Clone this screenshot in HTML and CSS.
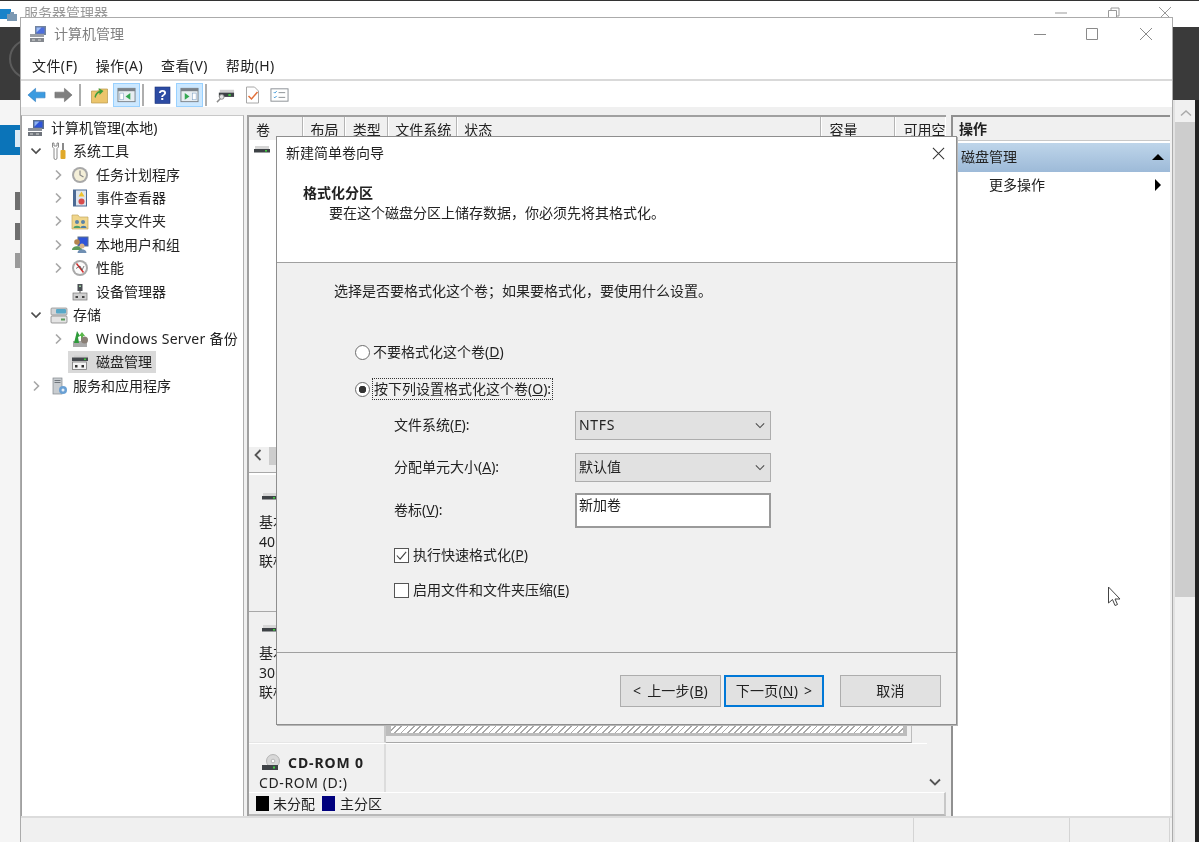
FILE: index.html
```html
<!DOCTYPE html>
<html lang="zh-CN">
<head>
<meta charset="utf-8">
<title>计算机管理</title>
<link rel="stylesheet" href="styles.css">
</head>
<body>
<svg class="defs" aria-hidden="true">
  <symbol id="computer" viewBox="0 0 18 18">
    <rect x="6" y="1" width="11" height="9" fill="#5a6f8c"/>
    <rect x="7.5" y="2.5" width="8" height="6" fill="#2f55d8"/>
    <path d="M7.5 2.5h5l-5 5z" fill="#8fb4f0"/>
    <rect x="1" y="9" width="14" height="3" fill="#8b9098"/>
    <rect x="1" y="13" width="14" height="4" fill="#6f747b"/>
    <rect x="3" y="14.5" width="3" height="1" fill="#d5d5d5"/>
    <rect x="9" y="14.5" width="3" height="1" fill="#d5d5d5"/>
  </symbol>
  <symbol id="disk" viewBox="0 0 18 18">
    <rect x="2" y="5" width="14" height="3" fill="#d6d6d6"/>
    <rect x="1" y="8" width="16" height="3.5" fill="#3e4246"/>
    <rect x="12" y="9" width="2" height="1.6" fill="#3fcc3f"/>
  </symbol>
  <symbol id="disk-mgr" viewBox="0 0 18 18">
    <rect x="3" y="2.500" width="14" height="2" fill="#cfcfcf"/>
    <rect x="1" y="4.500" width="16" height="3.500" fill="#45494d"/>
    <rect x="13" y="5.500" width="2" height="1.600" fill="#3fcc3f"/>
    <rect x="1.500" y="9" width="14" height="7.500" fill="#f4f4f4" stroke="#777" stroke-width=".8"/>
    <rect x="4" y="12" width="2.500" height="2.500" fill="#333"/>
    <rect x="10.500" y="12" width="2.500" height="2.500" fill="#333"/>
  </symbol>
  <symbol id="chev-r" viewBox="0 0 10 12"><path d="M3 1.500 7.500 6 3 10.500" fill="none" stroke="#a6a6a6" stroke-width="1.600"/></symbol>
  <symbol id="chev-d" viewBox="0 0 10 12"><path d="M0.500 3.500 5 8l4.500-4.500" fill="none" stroke="#4d4d4d" stroke-width="1.600"/></symbol>
  <symbol id="sel-chev" viewBox="0 0 12 8"><path d="M1 1.500 6 6.500l5-5" fill="none" stroke="#4d4d4d" stroke-width="1.300"/></symbol>
</svg>

<div class="server">
  <div class="server-title">
    <svg class="server-logo" viewBox="0 0 18 16"><rect x="0" y="3" width="11" height="10" fill="#1a83c9"/><rect x="7" y="8" width="10" height="7" fill="#7c99b3"/><rect x="10" y="6" width="4" height="2" fill="#7c99b3"/></svg>
    <span class="server-name">服务器管理器</span>
    <div class="server-ctrls">
      <svg class="ctl" viewBox="0 0 14 14"><path d="M1 7h12" stroke="#999" fill="none"/></svg>
      <svg class="ctl" viewBox="0 0 14 14"><path d="M2.500 4.500h8v8h-8zM5 4.500V2h8v8h-2.500" stroke="#999" fill="none"/></svg>
      <svg class="ctl" viewBox="0 0 14 14"><path d="M1 1l12 12M13 1 1 13" stroke="#999" fill="none"/></svg>
    </div>
  </div>
  <div class="server-body">
    <div class="server-left">
      <div class="left-dark"><i class="ring"></i></div>
      <div class="left-blue"><i class="left-blue-mark"></i></div>
      <i class="left-bar b1"></i><i class="left-bar b2"></i><i class="left-bar b3"></i>
    </div>
    <div class="server-right">
      <div class="right-dark"></div>
      <div class="right-row">
        <div class="scroll-track">
          <svg class="scroll-up" viewBox="0 0 12 8"><path d="M1 6.500 6 2l5 4.500" fill="none" stroke="#aaa" stroke-width="1.500"/></svg>
          <div class="scroll-thumb"></div>
        </div>
        <div class="right-edge"></div>
      </div>
    </div>
  </div>
</div>

<div class="mmc">
  <div class="mmc-title">
    <svg class="mmc-icon faded"><use href="#computer"/></svg>
    <span class="mmc-name">计算机管理</span>
    <div class="mmc-ctrls">
      <svg class="ctl" viewBox="0 0 14 14"><path d="M1 7.500h12" stroke="#8a8a8a" fill="none"/></svg>
      <svg class="ctl" viewBox="0 0 14 14"><path d="M1.500 1.500h11v11h-11z" stroke="#8a8a8a" fill="none"/></svg>
      <svg class="ctl" viewBox="0 0 14 14"><path d="M1 1l12 12M13 1 1 13" stroke="#8a8a8a" fill="none"/></svg>
    </div>
  </div>
  <nav class="menu">
    <span>文件(F)</span><span>操作(A)</span><span>查看(V)</span><span>帮助(H)</span>
  </nav>
  <div class="toolbar">
    <span class="tb"><svg viewBox="0 0 20 18"><path d="M1 9 9 2v4h10v6H9v4z" fill="#3b9be0" stroke="#2a78bd" stroke-width=".6"/></svg></span>
    <span class="tb"><svg viewBox="0 0 20 18"><path d="M19 9l-8-7v4H1v6h10v4z" fill="#7f7f7f" stroke="#6a6a6a" stroke-width=".6"/></svg></span>
    <i class="tb-sep"></i>
    <span class="tb"><svg viewBox="0 0 18 18"><path d="M1 5h6l2-2h8v14H1z" fill="#ecc56c" stroke="#b99a4c" stroke-width=".7"/><path d="M4 11C5 6 8 5 9 5L8 2l5 3-4 4V7C7 7 6 9 5 12z" fill="#3f9e3a"/></svg></span>
    <span class="tb on"><svg viewBox="0 0 20 18"><rect x="1" y="2" width="18" height="14" fill="#e8eef2" stroke="#7b8288"/><rect x="1" y="2" width="18" height="3" fill="#7b8288"/><rect x="3" y="7" width="4" height="7" fill="#fff" stroke="#7fa2c4" stroke-width=".6"/><path d="M14 7v7l-5-3.500z" fill="#34a853"/></svg></span>
    <i class="tb-sep"></i>
    <span class="tb"><svg viewBox="0 0 18 18"><rect x="1.500" y="1" width="15" height="16.500" fill="#2c4ba3" stroke="#1c3378" stroke-width=".6"/><text x="9" y="14" class="qmark" text-anchor="middle">?</text></svg></span>
    <span class="tb on"><svg viewBox="0 0 20 18"><rect x="1" y="2" width="18" height="14" fill="#e8eef2" stroke="#7b8288"/><rect x="1" y="2" width="18" height="3" fill="#7b8288"/><rect x="13" y="7" width="4" height="7" fill="#fff" stroke="#7fa2c4" stroke-width=".6"/><path d="M5 7v7l5-3.500z" fill="#34a853"/></svg></span>
    <i class="tb-sep"></i>
    <span class="tb"><svg viewBox="0 0 20 18"><rect x="4" y="3.500" width="15" height="3" fill="#cfcfcf"/><rect x="3" y="6.500" width="16" height="4.500" fill="#3e4246"/><rect x="13" y="8" width="2.500" height="2" fill="#3fcc3f"/><circle cx="6" cy="11" r="2.500" fill="#e4e4e4" stroke="#8a8a8a"/><path d="M4.500 13 1 16.500" stroke="#8a8a8a" stroke-width="1.500"/></svg></span>
    <span class="tb"><svg viewBox="0 0 18 18"><path d="M3 1h8l4 4v12H3z" fill="#fff" stroke="#a8a8a8"/><path d="M5 10l3 3 6-7" fill="none" stroke="#e2703a" stroke-width="1.500"/></svg></span>
    <span class="tb"><svg viewBox="0 0 20 18"><rect x="1" y="2.500" width="18" height="13" fill="#fff" stroke="#8a8f94"/><path d="M4 6l1 1 2-2M4 11l1 1 2-2" fill="none" stroke="#2f8fd6"/><path d="M9 6.500h7M9 11.500h7" stroke="#8a8f94"/></svg></span>
  </div>
  <div class="gap-strip"></div>

  <div class="panes">
    <div class="tree">
      <div class="node l0"><svg class="ico"><use href="#computer"/></svg><span>计算机管理(本地)</span></div>
      <div class="node l1"><svg class="chev"><use href="#chev-d"/></svg><svg class="ico" viewBox="0 0 18 18"><path d="M2.500 1v4l1.500 1.500V16a1.500 1.500 0 0 0 3 0V6.500L8.500 5V1L7 1v3H4V1z" fill="#fff" stroke="#7d7d7d" stroke-width=".9"/><rect x="12" y="1" width="2" height="7" fill="#8a8a8a"/><rect x="10.500" y="8" width="5" height="9" rx="1" fill="#e0a92a"/></svg><span>系统工具</span></div>
      <div class="node l2"><svg class="chev"><use href="#chev-r"/></svg><svg class="ico" viewBox="0 0 18 18"><circle cx="9" cy="9" r="8" fill="#a8a8a8"/><circle cx="9" cy="9" r="6" fill="#f4efd8"/><path d="M9 4.500V9l3.500 2" fill="none" stroke="#888" stroke-width="1.200"/></svg><span>任务计划程序</span></div>
      <div class="node l2"><svg class="chev"><use href="#chev-r"/></svg><svg class="ico" viewBox="0 0 18 18"><rect x="2.500" y="1" width="13" height="16" fill="#dfe6ee" stroke="#4b6a94"/><rect x="2.500" y="1" width="2.500" height="16" fill="#4b6a94"/><path d="M10.500 2.500l3 5h-6z" fill="#eec22f"/><circle cx="10.500" cy="12.500" r="3" fill="#d84c4c"/></svg><span>事件查看器</span></div>
      <div class="node l2"><svg class="chev"><use href="#chev-r"/></svg><svg class="ico" viewBox="0 0 18 18"><path d="M1 3h6l1.500 2H17v12H1z" fill="#f0d68c" stroke="#c2a860" stroke-width=".7"/><circle cx="6" cy="10" r="2" fill="#5a84a8"/><path d="M2.500 16c0-3 7-3 7 0z" fill="#4c9e6a"/><circle cx="12" cy="10" r="2" fill="#5a84a8"/><path d="M9.500 16c0-3 6-3 6 0z" fill="#4c7ea8"/></svg><span>共享文件夹</span></div>
      <div class="node l2"><svg class="chev"><use href="#chev-r"/></svg><svg class="ico" viewBox="0 0 18 18"><rect x="7" y="1" width="10" height="9" fill="#2f55d8" stroke="#5a6f8c"/><circle cx="6" cy="6" r="2.800" fill="#b5854f"/><path d="M1 14c0-5 10-5 10 0z" fill="#5d9a5a"/><circle cx="11" cy="10" r="2.500" fill="#d8b48a"/><path d="M6.500 17c0-5 9-5 9 0z" fill="#6f8fb3"/></svg><span>本地用户和组</span></div>
      <div class="node l2"><svg class="chev"><use href="#chev-r"/></svg><svg class="ico" viewBox="0 0 18 18"><circle cx="9" cy="9" r="8" fill="#a9a9a9"/><circle cx="9" cy="9" r="6" fill="#fbfbfb"/><path d="M5.500 4.500l7 9" stroke="#cf2f2f" stroke-width="1.500"/><path d="M5 9.500 9 7l2 4 2-4" fill="none" stroke="#444" stroke-width=".7"/></svg><span>性能</span></div>
      <div class="node l2"><i class="chev"></i><svg class="ico" viewBox="0 0 18 18"><rect x="6.500" y="1" width="5" height="7" fill="#4b4f54"/><rect x="8" y="2.500" width="2" height="1.500" fill="#9ad0a0"/><path d="M9 8v2" stroke="#555"/><rect x="2" y="10" width="14" height="7" fill="#d0d0d0" stroke="#777" stroke-width=".7"/><rect x="4.500" y="13" width="2.500" height="2" fill="#444"/><rect x="11" y="13" width="2.500" height="2" fill="#444"/></svg><span>设备管理器</span></div>
      <div class="node l1"><svg class="chev"><use href="#chev-d"/></svg><svg class="ico" viewBox="0 0 18 18"><rect x="1" y="2" width="16" height="7" rx="1" fill="#d2d4d6" stroke="#888" stroke-width=".7"/><rect x="6" y="3" width="10" height="4.500" rx="1" fill="#58a8c8"/><rect x="1" y="10" width="16" height="7" rx="1" fill="#e4e4e4" stroke="#777" stroke-width=".7"/><rect x="11" y="12.500" width="4" height="2" fill="#5b9a5b"/></svg><span>存储</span></div>
      <div class="node l2"><svg class="chev"><use href="#chev-r"/></svg><svg class="ico" viewBox="0 0 18 18"><rect x="2" y="11" width="14" height="6" fill="#a9a9a9"/><path d="M3 13 6 1l3 5-2 1 1 6z" fill="#2e9b3a"/><path d="M11 2l3 4h-2v5h-2V6H8z" fill="#58b84a"/><circle cx="13.500" cy="10" r="3.500" fill="#8a7f76"/></svg><span class="wide">Windows Server 备份</span></div>
      <div class="node l2 tight"><i class="chev"></i><div class="sel"><svg class="ico"><use href="#disk-mgr"/></svg><span>磁盘管理</span></div></div>
      <div class="node l1"><svg class="chev"><use href="#chev-r"/></svg><svg class="ico" viewBox="0 0 18 18"><rect x="3" y="1" width="9" height="16" fill="#c8ccd0" stroke="#80868c" stroke-width=".7"/><path d="M4.500 3.500h6M4.500 5.500h6" stroke="#70767c"/><circle cx="13" cy="13" r="4" fill="#6aa0d4"/><circle cx="13" cy="13" r="1.500" fill="#e8f0f8"/></svg><span>服务和应用程序</span></div>
    </div>

    <div class="center">
      <div class="cols">
        <span class="c1">卷</span><span class="c2">布局</span><span class="c3">类型</span><span class="c4">文件系统</span><span class="c5">状态</span><span class="c6">容量</span><span class="c7">可用空</span>
      </div>
      <div class="vol-list">
        <svg class="list-disk"><use href="#disk"/></svg>
      </div>
      <div class="hscroll">
        <svg class="hs-arrow" viewBox="0 0 8 12"><path d="M6.500 1 1.500 6l5 5" fill="none" stroke="#555" stroke-width="1.800"/></svg>
        <div class="hs-thumb"></div>
      </div>
      <div class="graph">
        <div class="disks">
          <div class="disk-row r1">
            <div class="disk-info">
              <svg class="di"><use href="#disk"/></svg>
              <div>基本</div><div>40.00 GB</div><div>联机</div>
            </div>
            <div class="disk-vols"></div>
          </div>
          <div class="disk-row r2">
            <div class="disk-info">
              <svg class="di"><use href="#disk"/></svg>
              <div>基本</div><div>30.00 GB</div><div>联机</div>
            </div>
            <div class="disk-vols">
              <div class="vol-box"><div class="vol-inner"><div class="hatch"></div></div></div>
            </div>
          </div>
          <div class="disk-row r3">
            <div class="disk-info cd">
              <div class="cd-head">
                <svg class="cd-icon" viewBox="0 0 20 18"><circle cx="12" cy="7" r="6.500" fill="#d8d8d8" stroke="#a0a0a0" stroke-width=".7"/><circle cx="12" cy="7" r="1.800" fill="#fff" stroke="#999" stroke-width=".6"/><rect x="1" y="11" width="16" height="5" fill="#3e4246"/><rect x="12" y="12.500" width="2" height="2" fill="#3fcc3f"/></svg>
                <b>CD-ROM 0</b>
              </div>
              <div class="cd-sub">CD-ROM (D:)</div>
            </div>
            <div class="disk-vols"></div>
          </div>
        </div>
        <div class="vscroll">
          <svg class="vs-arrow" viewBox="0 0 12 8"><path d="M1 1.500 6 6.500l5-5" fill="none" stroke="#555" stroke-width="1.800"/></svg>
        </div>
      </div>
      <div class="legend">
        <i class="swatch black"></i><span>未分配</span><i class="swatch navy"></i><span class="legend-b">主分区</span>
      </div>
    </div>

    <aside class="actions">
      <div class="act-head">操作</div>
      <div class="act-band"><span>磁盘管理</span><i class="tri-up"></i></div>
      <div class="act-item"><span>更多操作</span><i class="tri-right"></i></div>
    </aside>
  </div>

  <footer class="status">
    <div class="st st1"></div><div class="st st2"></div><div class="st st3"></div>
  </footer>
</div>

<div class="dialog">
  <div class="dlg-head">
    <div class="dlg-titlebar">
      <span>新建简单卷向导</span>
      <svg class="dlg-close" viewBox="0 0 14 14"><path d="M1 1l12 12M13 1 1 13" stroke="#333" fill="none" stroke-width="1.100"/></svg>
    </div>
    <h1 class="dlg-h">格式化分区</h1>
    <p class="dlg-sub">要在这个磁盘分区上储存数据，你必须先将其格式化。</p>
  </div>
  <div class="dlg-body">
    <p class="dlg-q">选择是否要格式化这个卷；如果要格式化，要使用什么设置。</p>
    <div class="radio-row first"><i class="radio"></i><span class="rlabel">不要格式化这个卷(<u>D</u>)</span></div>
    <div class="radio-row second"><i class="radio checked"></i><span class="rlabel focus">按下列设置格式化这个卷(<u>O</u>):</span></div>
    <div class="form">
      <label class="h29">文件系统(<u>F</u>):</label>
      <div class="select"><span class="latin">NTFS</span><svg class="sel-chev"><use href="#sel-chev"/></svg></div>
      <label class="h29">分配单元大小(<u>A</u>):</label>
      <div class="select"><span>默认值</span><svg class="sel-chev"><use href="#sel-chev"/></svg></div>
      <label class="h35">卷标(<u>V</u>):</label>
      <div class="input">新加卷</div>
    </div>
    <div class="check-row c-a"><i class="check on"><svg viewBox="0 0 14 14"><path d="M2 7l3.500 4L12 3" fill="none" stroke="#444" stroke-width="1.200"/></svg></i><span>执行快速格式化(<u>P</u>)</span></div>
    <div class="check-row c-b"><i class="check"></i><span>启用文件和文件夹压缩(<u>E</u>)</span></div>
  </div>
  <div class="dlg-foot">
    <button class="btn back" type="button">&lt; 上一步(<u>B</u>)</button>
    <button class="btn next" type="button">下一页(<u>N</u>) &gt;</button>
    <button class="btn cancel" type="button">取消</button>
  </div>
</div>

<svg class="cursor" viewBox="0 0 16 22"><path d="M1.500 1v16l4-3.500 2.500 6 2.500-1-2.500-5.500h5z" fill="#fff" stroke="#444" stroke-width="1"/></svg>
</body>
</html>
```

FILE: styles.css
```css
* { box-sizing: border-box; }
html, body { margin: 0; padding: 0; }
body {
  position: relative;
  width: 1199px;
  height: 842px;
  overflow: hidden;
  background: #f5f5f5;
  color: #222;
  font: 14px/20px "Noto Sans", "Noto Sans CJK SC", sans-serif;
  filter: blur(0.4px);
}
i { display: block; font-style: normal; }
svg { display: block; flex: none; }
.defs { position: absolute; width: 0; height: 0; }

/* background server manager */
.server { position: absolute; inset: 0; display: flex; flex-direction: column; border-top: 1px solid #333; }
.server-title { height: 26px; background: #fff; display: flex; align-items: center; flex: none; }
.server-logo { width: 18px; height: 16px; }
.server-name { margin: -2px 0 0 6px; color: #999; }
.server-ctrls { margin: -2px 0 0 auto; display: flex; gap: 38px; padding-right: 27px; }
.ctl { width: 14px; height: 14px; }
.server-body { flex: 1; display: flex; justify-content: space-between; }
.server-left { width: 20px; }
.left-dark { height: 73px; background: #3a3a3a; position: relative; overflow: hidden; }
.ring { position: absolute; left: 9px; top: 12px; width: 40px; height: 40px; border-radius: 50%; border: 2px solid #5c5c5c; }
.left-blue { height: 30px; margin-top: 25px; background: #0b74b9; padding: 5px 0 0 15px; }
.left-blue-mark { width: 5px; height: 17px; background: #dceaf5; }
.left-bar { width: 5px; margin-left: 15px; background: #6e6e6e; }
.b1 { height: 18px; margin-top: 37px; }
.b2 { height: 17px; margin-top: 13px; }
.b3 { height: 15px; margin-top: 13px; background: #9a9a9a; }
.server-right { width: 26px; display: flex; flex-direction: column; }
.right-dark { height: 73px; background: #3a3a3a; }
.right-row { flex: 1; display: flex; }
.scroll-track { width: 22px; background: #f0f0f0; border-left: 2px solid #e2e2e2; }
.scroll-up { width: 12px; height: 8px; margin: 9px 0 0 5px; }
.scroll-thumb { height: 475px; margin-top: 5px; background: #cdcdcd; }
.right-edge { width: 4px; background: #222; }

/* computer management window */
.mmc {
  position: absolute; left: 20px; top: 17px; width: 1153px; height: 825px;
  background: #f0f0f0; border: 1px solid #ababab; border-bottom: 0;
  display: flex; flex-direction: column;
}
.mmc-title { height: 34px; background: #fff; display: flex; align-items: center; flex: none; padding: 0 19px 2px 8px; }
.mmc-icon { width: 18px; height: 18px; }
.faded { opacity: .85; }
.mmc-name { margin-left: 7px; color: #808080; }
.mmc-ctrls { margin-left: auto; display: flex; gap: 38px; }
.mmc-ctrls .ctl:last-child { margin-left: 2px; }
.menu { height: 27px; background: #fff; display: flex; align-items: center; gap: 18px; padding-left: 11px; flex: none; letter-spacing: .4px; }
.toolbar { height: 28px; background: #fff; border-top: 2px solid #d9d9d9; display: flex; align-items: center; padding: 1px 0 0 2px; flex: none; }
.tb { width: 27px; height: 24px; display: flex; align-items: center; justify-content: center; border: 1px solid transparent; }
.tb svg { width: 19px; height: 18px; }
.tb.on { background: #cce8ff; border-color: #99d1ff; }
.tb-sep { width: 2px; height: 22px; background: #9a9a9a; margin: 0 5px 0 2px; opacity: .8; }
.qmark { font: bold 14px "Liberation Sans", sans-serif; fill: #fff; }
.gap-strip { height: 8px; flex: none; }

.panes { flex: 1; min-height: 0; display: flex; align-items: stretch; }
.tree { width: 223px; background: #fff; border-left: 1px solid #a0a0a0; border-right: 1px solid #b0b0b0; border-top: 1px solid #c8c8c8; flex: none; }
.node { height: 23.45px; display: flex; align-items: center; white-space: nowrap; }
.ico { width: 18px; height: 18px; }
.chev { width: 10px; height: 12px; }
.wide { letter-spacing: .28px; }
.l0 { padding-left: 5px; }
.l0 .ico { margin-right: 6px; }
.l1 { padding-left: 9px; }
.l1 .chev { margin-right: 9px; }
.l1 .ico { margin-right: 5px; }
.l2 { padding-left: 31px; }
.l2 .chev { margin-right: 8px; }
.l2 .ico { margin-right: 7px; }
.tight .chev { margin-right: 5px; }
.sel { display: flex; align-items: center; height: 22px; width: 88px; background: #d9d9d9; padding-left: 3px; }

.center { width: 699px; margin-left: 3px; border-left: 2px solid #a0a0a0; border-top: 2px solid #a0a0a0; display: flex; flex-direction: column; flex: none; background: #fff; }
.cols { height: 23px; display: flex; background: #f0f0f0; flex: none; }
.cols span { padding-left: 6.5px; border-right: 1px solid #b4b4b4; box-shadow: 1px 0 0 #fff; margin-right: 1px; line-height: 25px; white-space: nowrap; }
.cols .c1 { width: 54px; padding-left: 7px; }
.c2 { width: 41px; }
.cols .c3 { width: 42px; padding-left: 7px; }
.c4 { width: 68px; }
.c5 { width: 364px; }
.cols .c6 { width: 73px; padding-left: 7.500px; }
.cols .c7 { width: 49px; padding-left: 7.500px; border-right: 0; }
.vol-list { height: 307px; background: #fff; padding: 1px 0 0 4px; flex: none; }
.list-disk { width: 18px; height: 18px; }
.hscroll { height: 26px; background: #f0f0f0; flex: none; display: flex; border-bottom: 1px solid #a8a8a8; align-items: flex-start; }
.hs-arrow { width: 8px; height: 12px; margin: 2px 0 0 5px; }
.hs-thumb { width: 400px; height: 18px; background: #cdcdcd; margin-left: 7px; }
.graph { height: 319px; display: flex; flex: none; background: #f0f0f0; border-top: 2px solid #fff; }
.disks { width: 678px; flex: none; }
.disk-row { display: flex; }
.r1 { height: 137px; border-bottom: 1px solid #a8a8a8; }
.r2 { height: 131px; }
.r3 { height: 49px; overflow: hidden; border-top: 1px solid #fff; }
.disk-info { width: 137px; padding: 13px 0 0 10px; border-right: 2px solid #c8c8c8; flex: none; }
.r2 .disk-info { padding-top: 8px; border-bottom: 1px solid #e6e6e6; }
.disk-info > div { height: 19.500px; line-height: 19px; white-space: nowrap; }
.di { width: 18px; height: 18px; margin: 0 0 6px 2px; }
.r2 .di { margin-bottom: 5px; }
.r3 .disk-info.cd { padding-top: 8px; border-right-color: #dcdcdc; }
.disk-info > .cd-head { display: flex; align-items: center; height: 22px; line-height: 22px; letter-spacing: .9px; }
.cd-icon { width: 20px; height: 18px; margin: 0 7px 0 2px; }
.disk-info > .cd-sub { height: 18px; line-height: 18px; letter-spacing: .6px; }
.disk-vols { flex: 1; display: flex; flex-direction: column; justify-content: flex-end; padding-right: 15px; }
.vol-box { height: 20px; border-right: 1px solid #bcbcbc; border-bottom: 1px solid #a8a8a8; padding: 0 4px 6px 0; display: flex; }
.vol-inner { flex: 1; display: flex; align-items: flex-end; background: #bcbcbc; padding: 0 4px 3px 5px; }
.hatch { flex: 1; height: 8px; background: repeating-linear-gradient(135deg, #fff 0 3.200px, #a8a8a8 3.200px 4.450px); }
.vscroll { flex: 1; display: flex; align-items: flex-end; justify-content: center; padding: 0 3px 6px 0; }
.vs-arrow { width: 12px; height: 8px; }
.legend { height: 24px; flex: none; background: #f0f0f0; border-top: 1px solid #fff; border-bottom: 2px solid #b8b8b8; border-right: 2px solid #c8c8c8; display: flex; align-items: center; padding-left: 7px; }
.swatch { width: 13px; height: 15px; }
.black { background: #000; }
.navy { background: #00007d; margin-left: 7px; }
.legend span { margin-left: 4px; }
.legend .legend-b { margin-left: 5px; }

.actions { width: 219px; margin-left: 5px; background: #fff; border-left: 2px solid #909090; border-top: 2px solid #909090; flex: none; }
.act-head { height: 24px; background: #f0f0f0; font-weight: 700; padding-left: 6px; line-height: 24px; border-bottom: 1px solid #c8c8c8; }
.act-band { height: 29px; margin-top: 2px; display: flex; align-items: center; justify-content: space-between; padding: 0 6px 1px 8px; background: linear-gradient(#bed5ea, #9dbad8); }
.tri-up { width: 0; height: 0; border-left: 6px solid transparent; border-right: 6px solid transparent; border-bottom: 6px solid #000; }
.act-item { height: 26px; display: flex; align-items: center; justify-content: space-between; padding: 0 9px 0 36px; }
.tri-right { width: 0; height: 0; border-top: 6px solid transparent; border-bottom: 6px solid transparent; border-left: 6px solid #000; }

.status { height: 26px; flex: none; display: flex; background: #f0f0f0; border-top: 2px solid #dcdcdc; }
.st { height: 100%; border-right: 1px solid #d4d4d4; }
.st1 { width: 893px; }
.st2 { width: 156px; }
.st3 { width: 100px; }

/* dialog */
.dialog {
  position: absolute; left: 276px; top: 136px; width: 681px; height: 589px;
  background: #f0f0f0; border: 1px solid #8e8e8e; box-shadow: 1px 1px 0 #b5b5b5;
  display: flex; flex-direction: column;
}
.dlg-head { height: 126px; flex: none; background: #fff; border-bottom: 1px solid #a0a0a0; }
.dlg-titlebar { height: 34px; padding: 0 11px 2px 9px; display: flex; align-items: center; justify-content: space-between; }
.dlg-close { width: 13px; height: 13px; margin-top: 1px; }
.dlg-h { margin: 12px 0 0 26px; font: 700 14px/20px "Noto Sans", "Noto Sans CJK SC", sans-serif; }
.dlg-sub { margin: 0 0 0 52px; }
.dlg-body { flex: 1; padding-top: 18px; border-bottom: 1px solid #a0a0a0; }
.dlg-q { margin: 0 0 0 57px; }
.radio-row { display: flex; align-items: center; height: 20px; padding-left: 78px; }
.first { margin-top: 41px; }
.first .rlabel { margin-left: -1px; }
.second { margin-top: 17px; }
.radio { width: 15px; height: 15px; border-radius: 50%; border: 1px solid #6d6d6d; background: #fff; margin-right: 3px; flex: none; }
.radio.checked { background: radial-gradient(circle, #333 0 3.500px, #fff 4px); }
.rlabel { padding: 0 1px; white-space: nowrap; }
.focus { outline: 1px dotted #333; }
.form { display: grid; grid-template-columns: 181px 196px; margin: 12px 0 0 117px; row-gap: 13px; }
.form label { display: flex; align-items: center; }
.h29 { height: 29px; padding-bottom: 1px; }
.h35 { height: 35px; margin-top: -2px; padding-bottom: 2px; }
.select { height: 29px; background: #e1e1e1; border: 1px solid #adadad; display: flex; align-items: center; justify-content: space-between; padding: 0 5px 1px 3px; }
.latin { letter-spacing: .7px; }
.sel-chev { width: 10px; height: 7px; }
.input { height: 35px; margin-top: -2px; background: #fff; border: 2px solid #9a9a9a; padding: 0 0 0 2px; }
.check-row { display: flex; align-items: center; height: 20px; padding-left: 117px; }
.c-a { margin-top: 17px; }
.c-b { margin-top: 15px; }
.check { width: 15px; height: 15px; border: 1px solid #555; background: #fff; margin-right: 4px; flex: none; }
.check svg { width: 13px; height: 13px; }
.dlg-foot { height: 71px; flex: none; display: flex; justify-content: flex-end; align-items: flex-start; padding: 22px 15px 0 0; }
.btn { width: 101px; height: 32px; background: #e1e1e1; border: 1px solid #adadad; padding: 0; font: inherit; color: #222; letter-spacing: .2px; word-spacing: 2px; }
.back { margin-right: 3px; }
.next { width: 100px; border: 2px solid #0078d7; margin-right: 16px; }

.cursor { position: absolute; left: 1107px; top: 586px; width: 16px; height: 22px; }
```
